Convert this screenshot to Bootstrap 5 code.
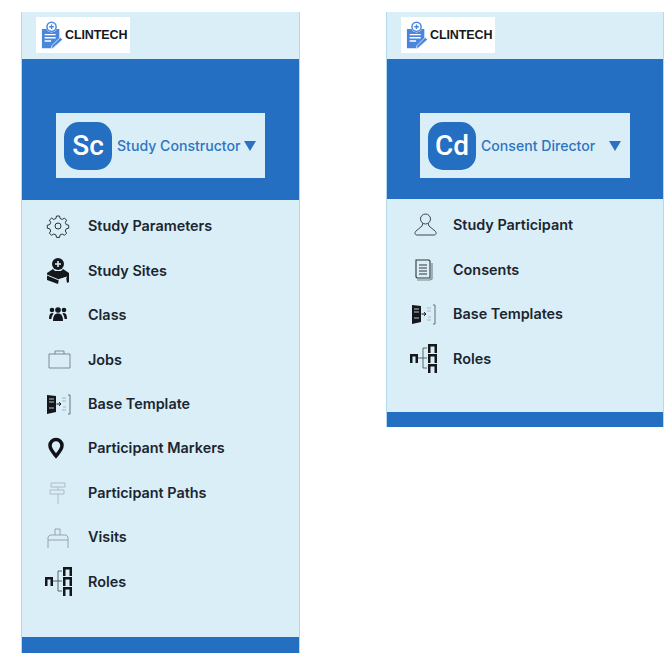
<!DOCTYPE html>
<html lang="en">
<head>
  <meta charset="UTF-8">
  <title>Clintech roles</title>
  <link href="https://cdn.jsdelivr.net/npm/bootstrap@5.3.1/dist/css/bootstrap.min.css" rel="stylesheet">
  <style>
    html, body { height: 660px; overflow: hidden; background: #fff; }
    .screens { padding: 12px 0 0 21px; gap: 86px; font-family: Inter, "Liberation Sans", sans-serif; }
    .side-panel { width: 279px; background: #daeef7; border: 1px solid #b4d8ec; border-width: 0 1px; }
    .side-panel.second { width: 278px; }
    .logo-bar { height: 47px; padding: 5px 0 0 14px; }
    .logo-box { width: 94px; height: 36px; background: #fff; gap: 2px; padding-left: 5px; }
    .logo-word { font-family: "Liberation Sans", sans-serif; font-size: 12.5px; font-weight: 700; color: #16191d; letter-spacing: -.1px; }
    .blue-band { height: 141px; background: #256fc2; padding: 54px 0 0 34px; }
    .second .blue-band { height: 140px; padding-left: 33px; }
    .role-box { width: 209px; height: 65px; background: #daeef7; padding-left: 8px; }
    .second .role-box { width: 210px; }
    .role-pic { width: 48px; height: 48px; border-radius: 15px; background: #256fc2; color: #fff; font-family: Roboto, sans-serif; font-size: 28px; font-weight: 500; }
    .role-name { color: #2f74c0; font-size: 14.1px; font-weight: 500; margin-left: 5px; white-space: nowrap; }
    .role-arrow { width: 0; height: 0; border-left: 6px solid transparent; border-right: 6px solid transparent; border-top: 10px solid #2b72c2; }
    .second .role-arrow { margin-left: 14px; }
    .menu-list { padding-top: 4px; }
    .first-menu { height: 437px; }
    .second-menu { height: 213px; }
    .menu-row { height: 44.4px; padding-left: 19px; color: #1b2530; font-size: 14.4px; font-weight: 600; background: transparent; border: 0; }
    .menu-icon { width: 34px; height: 30px; margin-right: 13px; flex: none; }
    .foot-band { height: 16px; background: #256fc2; }
    .second .foot-band { height: 15px; }
  </style>
</head>
<body>
  <svg width="0" height="0" class="d-block">
    <defs>
      <symbol id="logo" viewBox="0 0 24 30">
        <path d="M1 8h5a6 6 0 0 0 11 0h3v13l-7 8H1z" fill="#4a86dc"/>
        <circle cx="11.500" cy="5.500" r="5" fill="none" stroke="#4a86dc" stroke-width="1.600"/>
        <path d="M11.500 3v5M9 5.500h5" stroke="#4a86dc" stroke-width="1.500"/>
        <path d="M4 14h12M4 17.500h12M4 21h7" stroke="#fff" stroke-width="1.500"/>
        <path d="M14 28l-3 2 1-4 9-9 2.500 2.500z" fill="#4a86dc" stroke="#fff" stroke-width=".8"/>
      </symbol>
      <symbol id="gear" viewBox="0 0 34 30">
        <path d="M15.500 5h3l.6 2.500 2.200.9 2.200-1.300 2.100 2.100-1.300 2.200.9 2.200 2.500.6v3l-2.500.6-.9 2.200 1.300 2.200-2.100 2.100-2.200-1.300-2.200.9-.6 2.500h-3l-.6-2.500-2.200-.9-2.200 1.300-2.100-2.100 1.300-2.200-.9-2.200-2.500-.6v-3l2.500-.6.9-2.200-1.300-2.200 2.100-2.100 2.200 1.300 2.200-.9z" fill="none" stroke="#2b3138" stroke-width="1"/>
        <circle cx="17" cy="15" r="3" fill="none" stroke="#2b3138" stroke-width="1"/>
      </symbol>
      <symbol id="sites" viewBox="0 0 34 30">
        <circle cx="17" cy="8" r="6" fill="#14181c"/>
        <path d="M17 5v6M14 8h6" stroke="#daeef7" stroke-width="1.600"/>
        <path d="M6 17l6-4 2 2h6l2-2 6 4v9l-2 1-1-6-7 2-1 5-11-4z" fill="#14181c"/>
        <path d="M6 19l12 5M18 24l8-3" stroke="#daeef7" stroke-width="1"/>
      </symbol>
      <symbol id="group" viewBox="0 0 34 30">
        <circle cx="17" cy="10" r="2.800" fill="#14181c"/><circle cx="11" cy="10" r="2.300" fill="#14181c"/><circle cx="23" cy="10" r="2.300" fill="#14181c"/>
        <path d="M12 21c0-5 1.500-7.500 5-7.500s5 2.500 5 7.500z" fill="#14181c"/>
        <path d="M8 19c0-4 1-6 3-6 .8 0 1.200.3 1.600.7-1.300 1.300-2 3-2.200 5.300zM26 19c0-4-1-6-3-6-.8 0-1.200.3-1.600.7 1.300 1.300 2 3 2.200 5.300z" fill="#14181c"/>
      </symbol>
      <symbol id="case" viewBox="0 0 34 30">
        <path d="M8 10h21v14H8zM14 10V7h9v3" fill="none" stroke="#5b6268" stroke-width=".7"/>
      </symbol>
      <symbol id="template" viewBox="0 0 34 30">
        <path d="M6 6l9 1v16l-9 2z" fill="#14181c"/>
        <path d="M8 10h5M8 13h5M8 19h5" stroke="#b9c6ce" stroke-width="1.200"/>
        <path d="M15.500 15h4M18 13.200l2 1.800-2 1.800" fill="none" stroke="#14181c" stroke-width="1"/>
        <path d="M21 9h4M21 12h4M22 18h3M21 21h4" stroke="#a9b5bc" stroke-width="1"/>
        <path d="M27 6h2v19h-2" fill="none" stroke="#65717a" stroke-width="1"/>
      </symbol>
      <symbol id="pin" viewBox="0 0 34 30">
        <path d="M15 23c-4-5-6-7-6-10.500a6 6 0 0 1 12 0c0 3.500-2 5.500-6 10.500z" fill="none" stroke="#0f1216" stroke-width="3.500"/>
      </symbol>
      <symbol id="signpost" viewBox="0 0 34 30">
        <path d="M10 5h14v4H10zM9 12h14v4H9zM17 9v3M17 16v10" fill="none" stroke="#aab6bd" stroke-width=".9"/>
      </symbol>
      <symbol id="stamp" viewBox="0 0 34 30">
        <path d="M14 13V7h5v6M9 13h16l2 2v11M7 26V15l2-2M7 18h20" fill="none" stroke="#8f9ba3" stroke-width=".9"/>
      </symbol>
      <symbol id="tree" viewBox="0 0 34 30">
        <path d="M12 15h5M17 5v20M17 5h4M17 15h4M17 25h4" fill="none" stroke="#3b444b" stroke-width=".8"/>
        <path d="M4 11h8v9H9.500v-6.500h-3V20H4zM22 1h9v9h-2.500V3.500h-4V10H22zM22 11h9v9h-2.500v-6.500h-4V20H22zM22 21h9v9h-2.500v-6.500h-4V30H22z" fill="#14181c"/>
      </symbol>
      <symbol id="person" viewBox="0 0 34 30">
        <circle cx="19.500" cy="9" r="5" fill="none" stroke="#3e464d" stroke-width="1"/>
        <path d="M17 13l-1 3-6 5c-2 2-1 4 1 4h17c2 0 3-2 1-4l-6-5-1-3" fill="none" stroke="#3e464d" stroke-width="1"/>
      </symbol>
      <symbol id="doc" viewBox="0 0 34 30">
        <path d="M10 5h13l1 1v17H11l-1-1z" fill="none" stroke="#30373d" stroke-width="1.100"/>
        <path d="M13 10h8M13 13h8M13 16h8M13 19h8" stroke="#30373d" stroke-width="1"/>
        <path d="M11 25h13l2-1V8" fill="none" stroke="#7b868e" stroke-width="1.200"/>
      </symbol>
    </defs>
  </svg>

  <div class="screens d-flex align-items-start">
    <div class="side-panel">
      <div class="logo-bar">
        <div class="logo-box d-flex align-items-center">
          <svg width="22" height="31"><use href="#logo"/></svg>
          <span class="logo-word">CLINTECH</span>
        </div>
      </div>
      <div class="blue-band">
        <div class="role-box d-flex align-items-center">
          <div class="role-pic d-flex align-items-center justify-content-center">Sc</div>
          <span class="role-name">Study Constructor</span>
          <span class="role-arrow ms-1"></span>
        </div>
      </div>
      <div class="menu-list first-menu list-group list-group-flush">
        <a class="menu-row list-group-item d-flex align-items-center"><svg class="menu-icon"><use href="#gear"/></svg>Study Parameters</a>
        <a class="menu-row list-group-item d-flex align-items-center"><svg class="menu-icon"><use href="#sites"/></svg>Study Sites</a>
        <a class="menu-row list-group-item d-flex align-items-center"><svg class="menu-icon"><use href="#group"/></svg>Class</a>
        <a class="menu-row list-group-item d-flex align-items-center"><svg class="menu-icon"><use href="#case"/></svg>Jobs</a>
        <a class="menu-row list-group-item d-flex align-items-center"><svg class="menu-icon"><use href="#template"/></svg>Base Template</a>
        <a class="menu-row list-group-item d-flex align-items-center"><svg class="menu-icon"><use href="#pin"/></svg>Participant Markers</a>
        <a class="menu-row list-group-item d-flex align-items-center"><svg class="menu-icon"><use href="#signpost"/></svg>Participant Paths</a>
        <a class="menu-row list-group-item d-flex align-items-center"><svg class="menu-icon"><use href="#stamp"/></svg>Visits</a>
        <a class="menu-row list-group-item d-flex align-items-center"><svg class="menu-icon"><use href="#tree"/></svg>Roles</a>
      </div>
      <div class="foot-band"></div>
    </div>

    <div class="side-panel second">
      <div class="logo-bar">
        <div class="logo-box d-flex align-items-center">
          <svg width="22" height="31"><use href="#logo"/></svg>
          <span class="logo-word">CLINTECH</span>
        </div>
      </div>
      <div class="blue-band">
        <div class="role-box d-flex align-items-center">
          <div class="role-pic d-flex align-items-center justify-content-center">Cd</div>
          <span class="role-name">Consent Director</span>
          <span class="role-arrow"></span>
        </div>
      </div>
      <div class="menu-list second-menu list-group list-group-flush">
        <a class="menu-row list-group-item d-flex align-items-center"><svg class="menu-icon"><use href="#person"/></svg>Study Participant</a>
        <a class="menu-row list-group-item d-flex align-items-center"><svg class="menu-icon"><use href="#doc"/></svg>Consents</a>
        <a class="menu-row list-group-item d-flex align-items-center"><svg class="menu-icon"><use href="#template"/></svg>Base Templates</a>
        <a class="menu-row list-group-item d-flex align-items-center"><svg class="menu-icon"><use href="#tree"/></svg>Roles</a>
      </div>
      <div class="foot-band"></div>
    </div>
  </div>

  <script src="https://cdn.jsdelivr.net/npm/bootstrap@5.3.1/dist/js/bootstrap.bundle.min.js"></script>
</body>
</html>
